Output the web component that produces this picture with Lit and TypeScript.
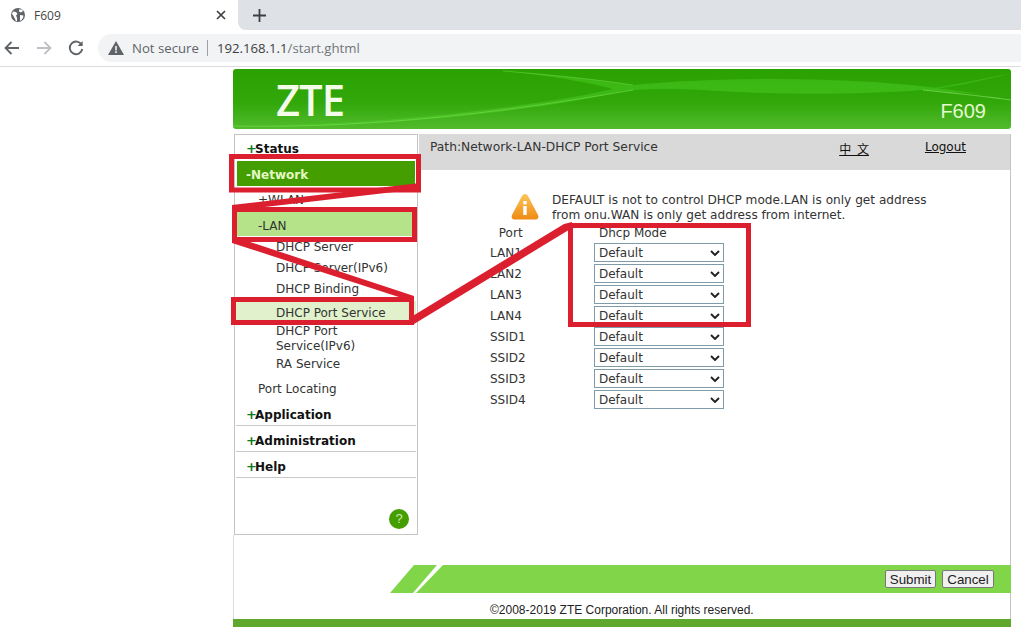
import { LitElement, html, css, svg } from "lit";
import { customElement } from "lit/decorators.js";

const ports = ["LAN1", "LAN2", "LAN3", "LAN4", "SSID1", "SSID2", "SSID3", "SSID4"];

@customElement("app-root")
export class AppRoot extends LitElement {
  static styles = css`
    :host { display: block; position: relative; width: 1021px; height: 639px; overflow: hidden; background: #fff; font-family: "DejaVu Sans", Verdana, sans-serif; font-size: 12px; color: #222; }
    .tabs { display: flex; height: 30px; background: #dee1e6; }
    .tab { width: 238px; background: #fff; display: flex; align-items: center; padding: 0 11px; box-sizing: border-box; gap: 9px; font: 12px "Open Sans", "Liberation Sans", sans-serif; color: #444; }
    .tab .title { flex: 1; }
    .newtab { width: 44px; background: #fff; }
    .newtab div { height: 30px; background: #dee1e6; border-bottom-left-radius: 8px; display: flex; align-items: center; padding-left: 15px; }
    .toolbar { display: flex; align-items: center; box-sizing: border-box; border-bottom: 1px solid #dadce0; height: 37px; }
    .nav { display: flex; align-items: center; width: 98px; padding-left: 2px; gap: 12px; box-sizing: border-box; }
    .omni { flex: 1; height: 28px; background: #f1f3f4; border-radius: 14px 0 0 14px; display: flex; align-items: center; padding-left: 10px; font: 13.2px "Open Sans", "Liberation Sans", sans-serif; }
    .ns { color: #5f6368; margin-left: 8px; }
    .sep { width: 1px; height: 16px; background: #9aa0a6; margin: 0 9px 0 8px; }
    .url { color: #3c4043; }
    .url span { color: #70757a; }

    .router { margin: 2px 0 0 233px; width: 778px; }
    .banner { height: 60px; position: relative; border-radius: 3px; background: linear-gradient(#2aa200, #31a70a 55%, #52bb2c); overflow: hidden; display: flex; align-items: center; justify-content: space-between; }
    .banner svg { position: absolute; inset: 0; }
    .logo { position: relative; margin-left: 43px; font: 600 44px "Open Sans", sans-serif; color: #f4fbe9; transform: scaleX(.95); transform-origin: left; letter-spacing: -1px; }
    .model { position: relative; align-self: flex-end; margin: 0 25px 6px 0; font: 20px "Liberation Sans", sans-serif; color: #e4f8ce; }
    .mid { margin-top: 5px; height: 431px; display: flex; gap: 1px; border-right: 1px solid #c4c4c4; padding-left: 1px; }
    .side { width: 184px; height: 401px; box-sizing: border-box; border: 1px solid #c4c4c4; display: flex; flex-direction: column; position: relative; padding: 0 1px; }
    .top { height: 25px; padding: 2px 0 0 10px; display: flex; align-items: center; font-weight: bold; font-size: 12px; color: #111; box-sizing: border-box; }
    .top b { color: #0a7a1c; font-size: 13px; width: 9px; }
    .top.line { height: 26px; border-bottom: 1px solid #c9c9c9; padding-top: 4px; }
    .top.active { height: 27px; background: #459e00; color: #e3f8c6; border: 1px solid #fff; padding-left: 9px; }
    .sub { display: flex; align-items: center; padding: 1px 0 0 22px; height: 24px; color: #333; box-sizing: border-box; }
    .sub.lan { height: 25px; padding-top: 5px; background: #b5e38a; }
    .leaf { padding-left: 40px; line-height: 15px; color: #333; box-sizing: border-box; }
    .leaf.r { padding-top: 4px; height: 21px; }
    .leaf.sel { height: 22px; padding-top: 5px; margin-top: 2px; background: #e0f1cc; }
    .leaf.multi { height: 30px; width: 130px; padding-top: 1px; }
    .leaf.ra { padding-top: 4px; height: 20px; }
    .sub.pl { height: 27px; padding-top: 5px; }
    .help { position: absolute; left: 154px; top: 374px; width: 20px; height: 20px; border-radius: 50%; background: #459e00; color: #cde8a8; font: 13px/20px "Liberation Sans", sans-serif; text-align: center; }

    .content { flex: 1; }
    .path { height: 36px; background: #d9d9d9; display: flex; padding: 6px 0 0 11px; box-sizing: border-box; color: #333; }
    .path .p { flex: 1; font-size: 12.28px; }
    .path a { color: #111; text-decoration: underline; }
    .path .zh { margin-right: 56px; font-family: "Noto Sans CJK SC", sans-serif; font-size: 12px; word-spacing: 3px; }
    .path .lo { margin-right: 44px; }
    .note { display: flex; align-items: flex-start; margin: 22px 0 0 91px; gap: 12px; line-height: 15px; color: #333; font-size: 12.13px; }
    .note svg { margin-top: 1px; flex: none; }
    .note div { padding-top: 1px; }
    .grid { display: grid; grid-template-columns: 104px 130px; grid-template-rows: 17px; margin: 2px 0 0 71px; grid-auto-rows: 21px; align-items: center; color: #333; }
    .hd { padding-left: 5px; line-height: 15px; }
    select {
      appearance: none; -webkit-appearance: none; width: 130px; height: 19px; box-sizing: border-box;
      font: 12px "DejaVu Sans", Verdana, sans-serif; color: #333; border: 1px solid #7f9aa8; padding: 0 0 0 4px; border-radius: 0;
      background: #fff url("data:image/svg+xml,%3Csvg xmlns='http://www.w3.org/2000/svg' width='10' height='6'%3E%3Cpath d='M1 1l4 4 4-4' fill='none' stroke='%23222' stroke-width='1.9'/%3E%3C/svg%3E") no-repeat right 3px center;
    }

    .band { margin-left: 157px; height: 28px; position: relative; display: flex; justify-content: flex-end; align-items: center; gap: 6px; padding-right: 17px; background: #80d648; clip-path: polygon(24px 0, 100% 0, 100% 100%, 0 100%); }
    .slash { position: absolute; left: 23px; top: 0; }
    button { height: 18px; width: 51px; padding: 0; font: 13.33px "Liberation Sans", sans-serif; color: #222; background: #f0f0f0; border: 1px solid #777; border-radius: 2px; box-sizing: border-box; }
    button.c { width: 52px; }
    .copy { height: 26px; box-sizing: border-box; display: flex; align-items: center; padding: 8px 0 0 257px; font: 12px "Liberation Sans", sans-serif; color: #222; border-right: 1px solid #c4c4c4; }
    .bar { height: 8px; background: #5fa82e; }
    .frame { position: absolute; left: 233px; top: 535px; width: 1px; height: 84px; background: #ddd; }
    .marks { position: absolute; inset: 0; pointer-events: none; }
  `;

  private chromeIcons() {
    return html`
      <svg width="20" height="20" viewBox="0 0 20 20" fill="none" stroke="#5f6368" stroke-width="1.8"><path d="M17 10H4M9.500 4L3.500 10l6 6"/></svg>
      <svg width="20" height="20" viewBox="0 0 20 20" fill="none" stroke="#bdc1c6" stroke-width="1.8"><path d="M3 10h13M10.500 4l6 6-6 6"/></svg>
      <svg width="20" height="20" viewBox="0 0 20 20" fill="none" stroke="#5f6368" stroke-width="1.900"><path d="M15.700 7A6.300 6.300 0 1 0 16.300 11"/><path d="M16.600 3v5h-5" fill="#5f6368" stroke="none"/></svg>`;
  }

  private marks() {
    const red = "#dc1f2e";
    return html`<svg class="marks" width="1021" height="639" viewBox="0 0 1021 639">
      ${svg`<g fill=${red}>
        <polygon points="420,183 420,189 240,210 232,210 232,205"/>
        <polygon points="232,236 232,243 405,299 414,299 414,296"/>
        <polygon points="411,317 414,324 572,228 572,222 564,224"/>
      </g>
      <g fill="none" stroke=${red} stroke-width="5">
        <rect x="231.500" y="156.500" width="187" height="33.500"/>
        <rect x="234.500" y="209.500" width="180" height="30"/>
        <rect x="233.500" y="299.500" width="178" height="23"/>
        <rect x="570.500" y="225.500" width="178" height="99"/>
      </g>`}
    </svg>`;
  }

  render() {
    return html`
      <div class="tabs">
        <div class="tab">
          <svg width="14" height="14" viewBox="0 0 14 14"><circle cx="7" cy="7" r="7" fill="#5f6368"/><path d="M2 3.500l3 .5 1.500 2-1.500 1.500L6 10v3H5L2.500 8 1 6zM8 1.500h3l1 1.500-2 1.500-2-1zM9 7l3.500.5L12 10l-2 2.500H9z" fill="#fff"/></svg>
          <span class="title">F609</span>
          <svg width="10" height="10" viewBox="0 0 10 10" stroke="#3c4043" stroke-width="1.7" style="margin-right:1px"><path d="M1 1l8 8M9 1l-8 8"/></svg>
        </div>
        <div class="newtab"><div><svg width="13" height="13" viewBox="0 0 13 13" stroke="#3c4043" stroke-width="1.8"><path d="M6.500 0v13M0 6.500h13"/></svg></div></div>
      </div>
      <div class="toolbar">
        <div class="nav">${this.chromeIcons()}</div>
        <div class="omni">
          <svg width="16" height="14" viewBox="0 0 16 14"><path d="M8 0l8 14H0z" fill="#5f6368"/><path d="M7.200 5h1.600v4.500H7.200zM7.200 10.300h1.600V12H7.200z" fill="#f1f3f4"/></svg>
          <span class="ns">Not secure</span><span class="sep"></span>
          <span class="url">192.168.1.1<span>/start.ghtml</span></span>
        </div>
      </div>

      <div class="router">
        <div class="banner">
          <svg width="778" height="60" viewBox="0 0 778 60" fill="none">
            <path d="M270 2C320 6 360 10 400 16C470 9 560 8 640 13C700 17 740 24 778 30C745 24 720 23 690 21C720 16 750 10 778 4C750 12 720 18 690 21C620 26 540 26 470 21C430 19 400 20 387 23C300 42 150 60 0 57C150 56 300 38 380 20C350 12 310 6 270 2Z" fill="#52d42c" opacity=".42"/>
            <path d="M0 57C150 60 290 40 400 21" stroke="#7de05a" stroke-width="1" opacity=".55"/>
            <path d="M270 2C320 6 360 10 400 16" stroke="#7de05a" stroke-width="1" opacity=".45"/>
            <path d="M690 21C720 24 750 27 778 31" stroke="#8ee46c" stroke-width="1.200" opacity=".6"/>
          </svg>
          <span class="logo">ZTE</span>
          <span class="model">F609</span>
        </div>
        <div class="mid">
          <nav class="side">
            <div class="top"><b>+</b>Status</div>
            <div class="top active">-Network</div>
            <div class="sub">+WLAN</div>
            <div class="sub lan">-LAN</div>
            <div class="leaf r">DHCP Server</div>
            <div class="leaf r">DHCP Server(IPv6)</div>
            <div class="leaf r">DHCP Binding</div>
            <div class="leaf sel">DHCP Port Service</div>
            <div class="leaf multi">DHCP Port<br>Service(IPv6)</div>
            <div class="leaf ra">RA Service</div>
            <div class="sub pl">Port Locating</div>
            <div class="top line"><b>+</b>Application</div>
            <div class="top line"><b>+</b>Administration</div>
            <div class="top line"><b>+</b>Help</div>
            <div class="help">?</div>
          </nav>
          <main class="content">
            <div class="path">
              <span class="p">Path:Network-LAN-DHCP Port Service</span>
              <a class="zh">中 文</a>
              <a class="lo">Logout</a>
            </div>
            <div class="note">
              <svg width="30" height="28" viewBox="0 0 30 28">
                <defs><linearGradient id="w" x1="0" y1="0" x2="0" y2="1"><stop offset="0" stop-color="#fcc65a"/><stop offset="1" stop-color="#ef8a14"/></linearGradient></defs>
                <path d="M15 1c1.500 0 2.500 1 3.300 2.500L28 22c1 2.500 0 4.500-3 4.500H5C2 26.500 1 24.500 2 22L11.700 3.500C12.500 2 13.500 1 15 1z" fill="url(#w)"/>
                <rect x="13.300" y="8" width="3.400" height="3.300" fill="#fff"/><rect x="13.300" y="13" width="3.400" height="9" fill="#fff"/>
              </svg>
              <div>DEFAULT is not to control DHCP mode.LAN is only get address<br>from onu.WAN is only get address from internet.</div>
            </div>
            <div class="grid">
              <span class="hd">&nbsp;Port</span><span class="hd">Dhcp Mode</span>
              ${ports.map((p) => html`<span>${p}</span><select><option>Default</option></select>`)}
            </div>
          </main>
        </div>
        <div class="band">
          <svg class="slash" width="30" height="28" viewBox="0 0 30 28"><polygon points="0,28 24,0 30,0 3,28" fill="#fff"/></svg>
          <button>Submit</button><button class="c">Cancel</button>
        </div>
        <div class="copy">©2008-2019 ZTE Corporation. All rights reserved.</div>
        <div class="bar"></div>
      </div>
      <div class="frame"></div>
      ${this.marks()}
    `;
  }
}
